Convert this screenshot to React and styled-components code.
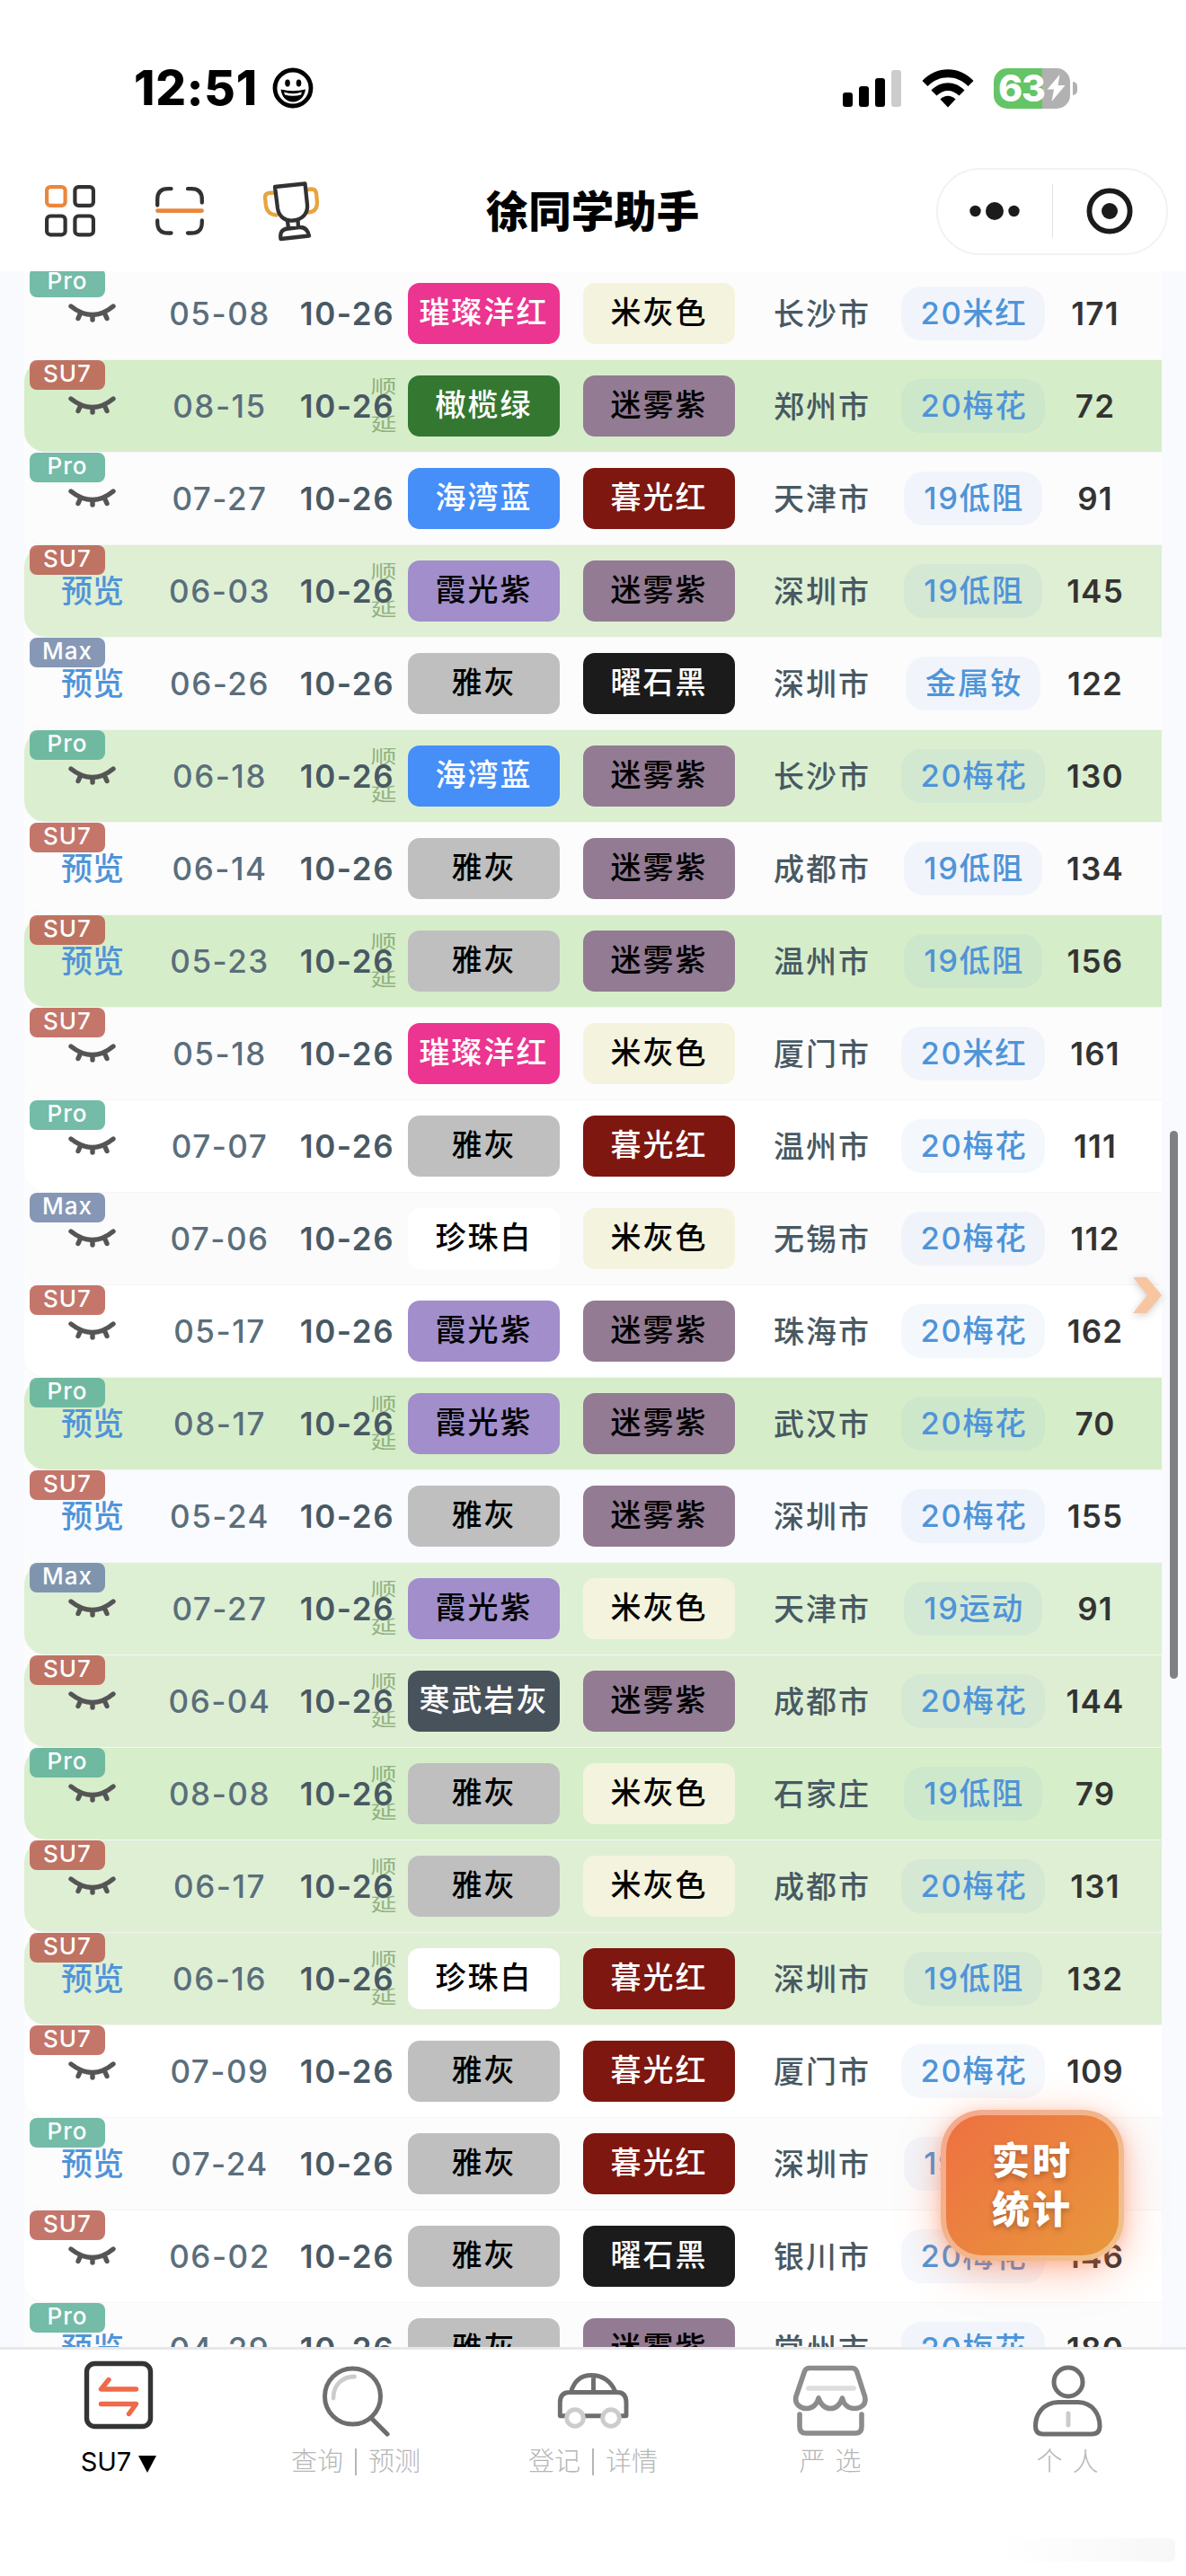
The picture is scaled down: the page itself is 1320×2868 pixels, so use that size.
import React from "react";
import styled, { createGlobalStyle } from 'styled-components';

const paints = {
    "璀璨洋红": ["#eb3590", "#fff"],
    "橄榄绿": ["#337731", "#fff"],
    "海湾蓝": ["#468ef8", "#fff"],
    "霞光紫": ["#a18ecb", "#000"],
    "雅灰": ["#bfbfbf", "#000"],
    "珍珠白": ["#fff", "#000"],
    "寒武岩灰": ["#48525b", "#fff"],
    "米灰色": ["#f4f4de", "#000"],
    "迷雾紫": ["#927b93", "#000"],
    "暮光红": ["#7d170f", "#fff"],
    "曜石黑": ["#1b1b1b", "#fff"],
}

const badges = {
    "Pro": "rgba(92, 175, 153, 0.85)",
    "SU7": "rgba(184, 88, 74, 0.82)",
    "Max": "rgba(104, 126, 163, 0.8)",
}

const DARK = "#d6edc9"
const LIGHT = "#deefd4"

// model, preview, locked date, delivery, paint, interior, city, wheel, days, background, postponed
const orders = [
    ["Pro", false, "05-08", "10-26", "璀璨洋红", "米灰色", "长沙市", "20米红", 171, "#fcfcfd", false],
    ["SU7", false, "08-15", "10-26", "橄榄绿", "迷雾紫", "郑州市", "20梅花", 72, DARK, true],
    ["Pro", false, "07-27", "10-26", "海湾蓝", "暮光红", "天津市", "19低阻", 91, "#fcfcfd", false],
    ["SU7", true, "06-03", "10-26", "霞光紫", "迷雾紫", "深圳市", "19低阻", 145, LIGHT, true],
    ["Max", true, "06-26", "10-26", "雅灰", "曜石黑", "深圳市", "金属钕", 122, "#fcfcfd", false],
    ["Pro", false, "06-18", "10-26", "海湾蓝", "迷雾紫", "长沙市", "20梅花", 130, "#dbefd0", true],
    ["SU7", true, "06-14", "10-26", "雅灰", "迷雾紫", "成都市", "19低阻", 134, "#fcfcfd", false],
    ["SU7", true, "05-23", "10-26", "雅灰", "迷雾紫", "温州市", "19低阻", 156, DARK, true],
    ["SU7", false, "05-18", "10-26", "璀璨洋红", "米灰色", "厦门市", "20米红", 161, "#fcfcfd", false],
    ["Pro", false, "07-07", "10-26", "雅灰", "暮光红", "温州市", "20梅花", 111, "#fff", false],
    ["Max", false, "07-06", "10-26", "珍珠白", "米灰色", "无锡市", "20梅花", 112, "#fbfbfc", false],
    ["SU7", false, "05-17", "10-26", "霞光紫", "迷雾紫", "珠海市", "20梅花", 162, "#fff", false],
    ["Pro", true, "08-17", "10-26", "霞光紫", "迷雾紫", "武汉市", "20梅花", 70, DARK, true],
    ["SU7", true, "05-24", "10-26", "雅灰", "迷雾紫", "深圳市", "20梅花", 155, "#fafbfe", false],
    ["Max", false, "07-27", "10-26", "霞光紫", "米灰色", "天津市", "19运动", 91, "#ddf0d4", true],
    ["SU7", false, "06-04", "10-26", "寒武岩灰", "迷雾紫", "成都市", "20梅花", 144, "#deeed3", true],
    ["Pro", false, "08-08", "10-26", "雅灰", "米灰色", "石家庄", "19低阻", 79, "#d6eeca", true],
    ["SU7", false, "06-17", "10-26", "雅灰", "米灰色", "成都市", "20梅花", 131, LIGHT, true],
    ["SU7", true, "06-16", "10-26", "珍珠白", "暮光红", "深圳市", "19低阻", 132, LIGHT, true],
    ["SU7", false, "07-09", "10-26", "雅灰", "暮光红", "厦门市", "20梅花", 109, "#fff", false],
    ["Pro", true, "07-24", "10-26", "雅灰", "暮光红", "深圳市", "19低阻", 121, "#fcfcfd", false],
    ["SU7", false, "06-02", "10-26", "雅灰", "曜石黑", "银川市", "20梅花", 146, "#fff", false],
    ["Pro", true, "04-29", "10-26", "雅灰", "迷雾紫", "常州市", "20梅花", 180, "#fcfcfd", false],
]

const ClosedEye = () => (
    <svg width="54" height="24" viewBox="0 0 54 24" fill="none" stroke="#555" strokeLinecap="round">
        <path d="M3 4 Q27 23 50 4" strokeWidth="5.400" />
        <path d="M13 13 L11 17.500 M27 15 V19 M41 13 L43 17.500" strokeWidth="5.400" />
    </svg>
)

const SmileIcon = () => (
    <svg width="46" height="46" viewBox="0 0 46 46">
        <circle cx="23" cy="23" r="20" fill="none" stroke="#000" strokeWidth="4.800" />
        <ellipse cx="17" cy="17.500" rx="2.800" ry="4" />
        <ellipse cx="29.500" cy="17.500" rx="2.800" ry="4" />
        <path d="M9.500 24.500 Q23 28 37 24.500 C36 33 30 38.500 23 38.500 C16 38.500 10.500 33 9.500 24.500Z" />
        <path d="M13 27.500 Q23 31 33 27.500 L32 30.500 Q23 33 14 30.500Z" fill="#fff" />
    </svg>
)

const SignalIcon = () => (
    <svg width="66" height="42" viewBox="0 0 66 42">
        <rect x="0" y="26" width="11" height="16" rx="3" />
        <rect x="18" y="19" width="11" height="23" rx="3" />
        <rect x="36" y="10" width="11" height="32" rx="3" />
        <rect x="54" y="1" width="11" height="41" rx="3" fill="#ccc" />
    </svg>
)

const WifiIcon = () => (
    <svg width="58" height="43" viewBox="0 0 58 43">
        <path d="M0.500 13 C16 -4 42 -4 57.500 13 L51.500 19 C39 6 19 6 6.500 19Z" />
        <path d="M10.500 23.500 C21 12.500 37 12.500 47.500 23.500 L41.500 29.500 C34 22 24 22 16.500 29.500Z" />
        <path d="M20.500 33.500 C25.500 28.500 32.500 28.500 37.500 33.500 L29 42.500Z" />
    </svg>
)

const GridIcon = () => (
    <svg width="56" height="58" viewBox="0 0 56 58" fill="none" stroke="#323233" strokeWidth="4.200">
        <rect x="2.100" y="2.100" width="20.500" height="20.800" rx="4" stroke="#e9873c" />
        <rect x="33.400" y="2.100" width="20.500" height="20.800" rx="4" />
        <rect x="2.100" y="34.500" width="20.500" height="20.800" rx="4" />
        <rect x="33.400" y="34.500" width="20.500" height="20.800" rx="4" />
    </svg>
)

const ScanIcon = () => (
    <svg width="54" height="54" viewBox="0 0 54 54" fill="none" stroke="#323233" strokeWidth="4.300" strokeLinecap="round">
        <path d="M2.200 20.500 V14 Q2.200 2.200 14 2.200 H17.500 M36 2.200 H40 Q51.800 2.200 51.800 14 V17.500" />
        <path d="M2.200 37.500 V40 Q2.200 51.500 14 51.500 H17.500 M36 51.500 H40 Q51.800 51.500 51.800 40 V37.500" />
        <path d="M2.500 26.600 H51.500" stroke="#e9873c" strokeWidth="4.800" />
    </svg>
)

const TrophyIcon = () => (
    <svg width="64" height="68" viewBox="0 0 64 68" fill="none" strokeWidth="4.300" strokeLinejoin="round" strokeLinecap="round">
        <path d="M13 13.500 L7 14 Q3 14.500 3 19 L4 28 Q5.500 38 16 38.500 M50 10 L55 9.500 Q59 9.500 60 14 L61 24 Q61 35 51 35.500" stroke="#e8a442" />
        <path d="M14 7 L47.500 3.500 L50 27 C51 38 43 43.500 34.500 44.500 C25 45.500 18.500 40 17 31Z" stroke="#323233" />
        <path d="M28 45 L29 53 M39.500 44 L40 52 M20.500 65 Q18.500 54 29 53.500 L41 52 Q50 51.500 52 61.500 Z" stroke="#323233" />
    </svg>
)

const SwapIcon = () => (
    <svg width="80" height="86" viewBox="0 0 80 86" fill="none" strokeLinecap="round" strokeLinejoin="round">
        <rect x="4.500" y="5.500" width="71" height="70" rx="9" stroke="#333435" strokeWidth="5.400" />
        <path d="M29 23.500 L20.500 34 H59.500 M20.500 50.500 H59.500 L51.500 61.500" stroke="#ee6a48" strokeWidth="5.400" />
    </svg>
)

const SearchIcon = () => (
    <svg width="80" height="86" viewBox="0 0 80 86" fill="none" strokeLinecap="round">
        <circle cx="36.500" cy="42" r="31" stroke="#6e6e6e" strokeWidth="5" />
        <path d="M57.500 66.500 L75 84" stroke="#6e6e6e" strokeWidth="5.200" />
        <path d="M15 44 C15 29 25 20 38.500 20" stroke="#ccc" strokeWidth="4.800" />
    </svg>
)

const CarIcon = () => (
    <svg width="80" height="86" viewBox="0 0 80 86" fill="none" strokeWidth="4.900" strokeLinejoin="round">
        <path d="M11 63.800 H3.300 V49 Q3.300 37.500 14 37.500 H67 Q77 37.500 77 49 V63.800 H69 M29 63.800 H51 M15.500 37 Q21 18.500 38 18.500 Q57 18.500 65 37 M40.500 18.500 V37" stroke="#6e6e6e" />
        <circle cx="20" cy="66" r="9.300" stroke="#ccc" />
        <circle cx="60" cy="66" r="9.300" stroke="#ccc" />
    </svg>
)

const ShopIcon = () => (
    <svg width="84" height="86" viewBox="0 0 84 86" fill="none" stroke="#8c8c8c" strokeWidth="5.600" strokeLinecap="round" strokeLinejoin="round">
        <path d="M19 10.500 H66 Q70 10.500 71.500 14 L80.500 42 C83 52 75 55.500 69 55.500 C62 55.500 57 51 55.500 44 C53 51 49 55.500 42.500 55.500 C36 55.500 31.500 51 29 44 C27.500 51 22 55.500 16 55.500 C9 55.500 2 51 4 42 L13.500 14 Q15 10.500 19 10.500Z" />
        <path d="M8 62 V76 Q8 83 15 83 H70 Q77 83 77 76 V62" />
        <path d="M18 33 H68" stroke="#ddd" />
    </svg>
)

const PersonIcon = () => (
    <svg width="80" height="88" viewBox="0 0 80 88" fill="none" stroke="#6e6e6e" strokeWidth="5">
        <circle cx="41" cy="27" r="16" />
        <path d="M30 49.500 H52 C69 50 76 64 76 76 Q76 85 67 85 H13 Q4.500 85 4.500 76 C4.500 64 12 50 30 49.500Z" />
        <path d="M41 62 V75" stroke="#ccc" strokeWidth="5" strokeLinecap="round" />
    </svg>
)

const OrderRow = ({ order }) => {
    const [model, preview, locked, delivery, paint, interior, city, wheel, days, bg, postponed] = order

    return (
        <Row $bg={bg}>
            <Badge $color={badges[model]}>{model}</Badge>
            <Cell>{preview ? <Preview>预览</Preview> : <ClosedEye />}</Cell>
            <DateCell>{locked}</DateCell>
            <DeliveryCell>
                {postponed && <Postponed><span>顺</span><span>延</span></Postponed>}
                <span>{delivery}</span>
            </DeliveryCell>
            <ChipCell><Chip $paint={paints[paint]}>{paint}</Chip></ChipCell>
            <ChipCell><Chip $paint={paints[interior]}>{interior}</Chip></ChipCell>
            <CityCell>{city}</CityCell>
            <Cell><Wheel>{wheel}</Wheel></Cell>
            <DaysCell>{days}</DaysCell>
        </Row>
    )
}

const App = () => {
    return (
        <Screen>
            <GlobalStyle />
            <StatusBar>
                <Clock>12:51</Clock>
                <SmileIcon />
                <StatusRight>
                    <SignalIcon />
                    <WifiIcon />
                    <BatteryWrap>
                        <Battery>
                            <span>63</span>
                            <svg width="21" height="30" viewBox="0 0 21 30"><path d="M14.500 0 L0.500 16.500 H8 L5.500 30 L20.500 12 H12.500Z" fill="#fff" /></svg>
                        </Battery>
                        <BatteryCap />
                    </BatteryWrap>
                </StatusRight>
            </StatusBar>

            <NavBar>
                <NavIcons>
                    <GridIcon />
                    <ScanIcon />
                    <TrophyIcon />
                </NavIcons>
                <Title>徐同学助手</Title>
                <Capsule>
                    <CapsuleButton>
                        <svg width="56" height="22" viewBox="0 0 56 22" fill="#1b1b1b">
                            <circle cx="6.500" cy="11" r="6.200" /><circle cx="28" cy="11" r="10" /><circle cx="49.500" cy="11" r="6.200" />
                        </svg>
                    </CapsuleButton>
                    <CapsuleDivider />
                    <CapsuleButton>
                        <svg width="52" height="52" viewBox="0 0 52 52">
                            <circle cx="26" cy="26" r="22.600" fill="none" stroke="#1b1b1b" strokeWidth="5.800" />
                            <circle cx="26" cy="26" r="9" fill="#1b1b1b" />
                        </svg>
                    </CapsuleButton>
                </Capsule>
            </NavBar>

            <ListView>
                <List>
                    {orders.map((order, i) => <OrderRow key={i} order={order} />)}
                </List>
                <Arrow width="48" height="52" viewBox="0 0 48 52">
                    <path d="M2 3 H17 L34 23 L17 43 H2 L18 23Z" fill="#f7c5a0" />
                </Arrow>
                <ScrollThumb />
                <StatsButton>
                    <span>实时</span>
                    <span>统计</span>
                </StatsButton>
            </ListView>

            <TabBar>
                <Tab $active><SwapIcon /><TabLabel>SU7 <Triangle /></TabLabel></Tab>
                <Tab><SearchIcon /><TabLabel>查询<Bar />预测</TabLabel></Tab>
                <Tab><CarIcon /><TabLabel>登记<Bar />详情</TabLabel></Tab>
                <Tab><ShopIcon /><TabLabel $gap>严<i />选</TabLabel></Tab>
                <Tab><PersonIcon /><TabLabel $gap>个<i />人</TabLabel></Tab>
            </TabBar>
            <Smudge />
        </Screen>
    )
}

const GlobalStyle = createGlobalStyle`
    * { box-sizing: border-box; }

    body {
        margin: 0;
        background: #fff;
    }
`

const Screen = styled.div`
    position: relative;
    width: 1320px;
    height: 2868px;
    display: flex;
    flex-direction: column;
    overflow: hidden;
    background: #fff;
    font-family: Inter, "Noto Sans CJK SC", sans-serif;
`

const StatusBar = styled.div`
    height: 182px;
    flex: none;
    display: flex;
    align-items: center;
    padding: 14px 121px 0 149px;
`

const Clock = styled.div`
    width: 154px;
    font-size: 53px;
    font-weight: 800;
    letter-spacing: 0.8px;
    line-height: 60px;
    white-space: nowrap;
`

const StatusRight = styled.div`
    display: flex;
    align-items: center;
    gap: 22px;
    margin-left: auto;
`

const BatteryWrap = styled.div`
    display: flex;
    align-items: center;
    gap: 3px;
`

const Battery = styled.div`
    width: 85px;
    height: 45px;
    display: flex;
    align-items: center;
    justify-content: center;
    gap: 2px;
    border-radius: 15px;
    background: linear-gradient(90deg, #65c466 64%, #b1b1b1 64%);
    color: #fff;
    font-size: 41px;
    font-weight: 800;
    letter-spacing: -1px;
    line-height: 45px;
`

const BatteryCap = styled.div`
    width: 5px;
    height: 15px;
    border-radius: 0 6px 6px 0;
    background: #b1b1b1;
`

const NavBar = styled.div`
    height: 120px;
    flex: none;
    display: grid;
    grid-template-columns: 1fr 260px 1fr;
    align-items: center;
    padding: 0 20px 14px 50px;
`

const NavIcons = styled.div`
    display: flex;
    align-items: center;
    gap: 67px;

    > :last-child {
        margin-left: -2px;
    }
`

const Title = styled.div`
    font-size: 47.5px;
    font-weight: 900;
    line-height: 60px;
    text-align: center;
    white-space: nowrap;
    margin: 2px 0 0 -31px;
`

const Capsule = styled.div`
    width: 258px;
    height: 97px;
    margin-left: auto;
    display: flex;
    align-items: center;
    border: 2px solid #f2f2f2;
    border-radius: 49px;
`

const CapsuleButton = styled.div`
    flex: 1;
    display: flex;
    justify-content: center;
`

const CapsuleDivider = styled.div`
    width: 1px;
    height: 60px;
    background: #e3e3e3;
`

const ListView = styled.div`
    position: relative;
    height: 2311px;
    flex: none;
    overflow: hidden;
    background: #f8fafd;
`

const List = styled.div`
    width: 1266px;
    margin: -4px 0 0 27px;
    background: #fcfcfd;
`

const Row = styled.div`
    position: relative;
    height: 103px;
    display: grid;
    grid-template-columns: 152px 130px 145px 195px 169px 192px 146px 124px;
    align-items: center;
    background: ${props => props.$bg};
    border-bottom: 1px solid #f5f5f6;
    border-radius: 24px 0 0 24px;
    font-size: 35px;
    font-weight: 500;
`

const Badge = styled.div`
    position: absolute;
    left: 6px;
    top: 0;
    width: 84px;
    height: 33px;
    border-radius: 8px;
    background: ${props => props.$color};
    color: #fff;
    font-size: 26px;
    font-weight: 550;
    letter-spacing: 1px;
    line-height: 30px;
    text-align: center;
`

const Cell = styled.div`
    display: flex;
    align-items: center;
    justify-content: center;
    white-space: nowrap;
`

const Preview = styled.span`
    color: #4f94d8;
    font-size: 35px;
    line-height: 40px;
`

const DateCell = styled(Cell)`
    color: #5a6e7b;
    font-weight: 550;
    letter-spacing: 1.5px;
    padding-left: 1px;
`

const DeliveryCell = styled(Cell)`
    position: relative;
    color: #485963;
    font-weight: 570;
    letter-spacing: 1.6px;
    padding-left: 10px;

    > span {
        position: relative;
    }
`

const Postponed = styled.div`
    position: absolute;
    right: 12px;
    top: 50%;
    width: 30px;
    display: flex;
    flex-direction: column;
    align-items: center;
    transform: translateY(-50%) scaleX(1.45);
    color: rgba(96, 136, 76, 0.6);
    font-size: 20px;
    font-weight: 400;
    letter-spacing: 0;
    line-height: 42px;
`

const ChipCell = styled(Cell)`
    justify-content: flex-start;
`

const Chip = styled.div`
    width: 169px;
    height: 68px;
    border-radius: 13px;
    background: ${props => props.$paint[0]};
    color: ${props => props.$paint[1]};
    font-size: 34px;
    letter-spacing: 2px;
    line-height: 66px;
    text-align: center;
`

const CityCell = styled(Cell)`
    color: #485963;
    font-size: 34px;
    letter-spacing: 2px;
    padding: 0 0 3px 2px;
`

const Wheel = styled.div`
    height: 60px;
    padding: 0 20px 0 22px;
    border-radius: 22px;
    background: rgba(74, 144, 217, 0.06);
    color: #4f94d8;
    font-size: 34.5px;
    font-weight: 500;
    letter-spacing: 1.6px;
    line-height: 59px;
`

const DaysCell = styled(Cell)`
    color: #333;
    font-weight: 600;
    letter-spacing: 1.2px;
    padding-left: 2px;
`

const Arrow = styled.svg`
    position: absolute;
    left: 1259px;
    top: 1117px;
    filter: drop-shadow(0 2px 4px rgba(0, 0, 0, 0.2));
`

const ScrollThumb = styled.div`
    position: absolute;
    right: 9px;
    top: 957px;
    width: 9px;
    height: 610px;
    border-radius: 5px;
    background: #7f8082;
`

const StatsButton = styled.div`
    position: absolute;
    right: 69px;
    top: 2047px;
    width: 204px;
    height: 168px;
    display: flex;
    flex-direction: column;
    align-items: center;
    justify-content: center;
    border: 6px solid rgba(255, 255, 255, 0.4);
    border-radius: 46px;
    background: linear-gradient(135deg, #ee6f42, #e8993c) border-box;
    box-shadow: 0 12px 48px rgba(255, 107, 53, 0.4), 0 4px 16px rgba(255, 107, 53, 0.3);
    color: #fff;
    font-size: 42px;
    font-weight: 900;
    letter-spacing: 3px;
    line-height: 54px;
    text-shadow: 0 3px 6px rgba(0, 0, 0, 0.25);
`

const TabBar = styled.div`
    height: 255px;
    display: grid;
    grid-template-columns: repeat(5, 264px);
    border-top: 3px solid #e8e8e8;
    background: #fff;
`

const Tab = styled.div`
    display: flex;
    flex-direction: column;
    align-items: center;
    padding-top: 9px;
    color: ${props => props.$active ? "#000" : "#b6b6b6"};
    font-weight: ${props => props.$active ? 400 : 300};

    > svg {
        height: 88px;
        flex: none;
    }
`

const TabLabel = styled.div`
    display: flex;
    align-items: center;
    margin-top: 9px;
    font-size: 29px;
    line-height: 38px;
    ${props => props.$gap && "i { width: 11px; }"}
`

const Bar = styled.span`
    width: 2px;
    height: 30px;
    margin: 0 13px;
    background: #b6b6b6;
`

const Triangle = styled.span`
    margin: 4px 0 0 8px;
    border: solid transparent;
    border-width: 19px 10.5px 0;
    border-top-color: #000;
`

const Smudge = styled.div`
    position: absolute;
    right: 12px;
    bottom: 16px;
    width: 200px;
    height: 26px;
    border-radius: 0 6px 6px 0;
    background: linear-gradient(90deg, #fff, #f7f7f7);
`

export default App;
